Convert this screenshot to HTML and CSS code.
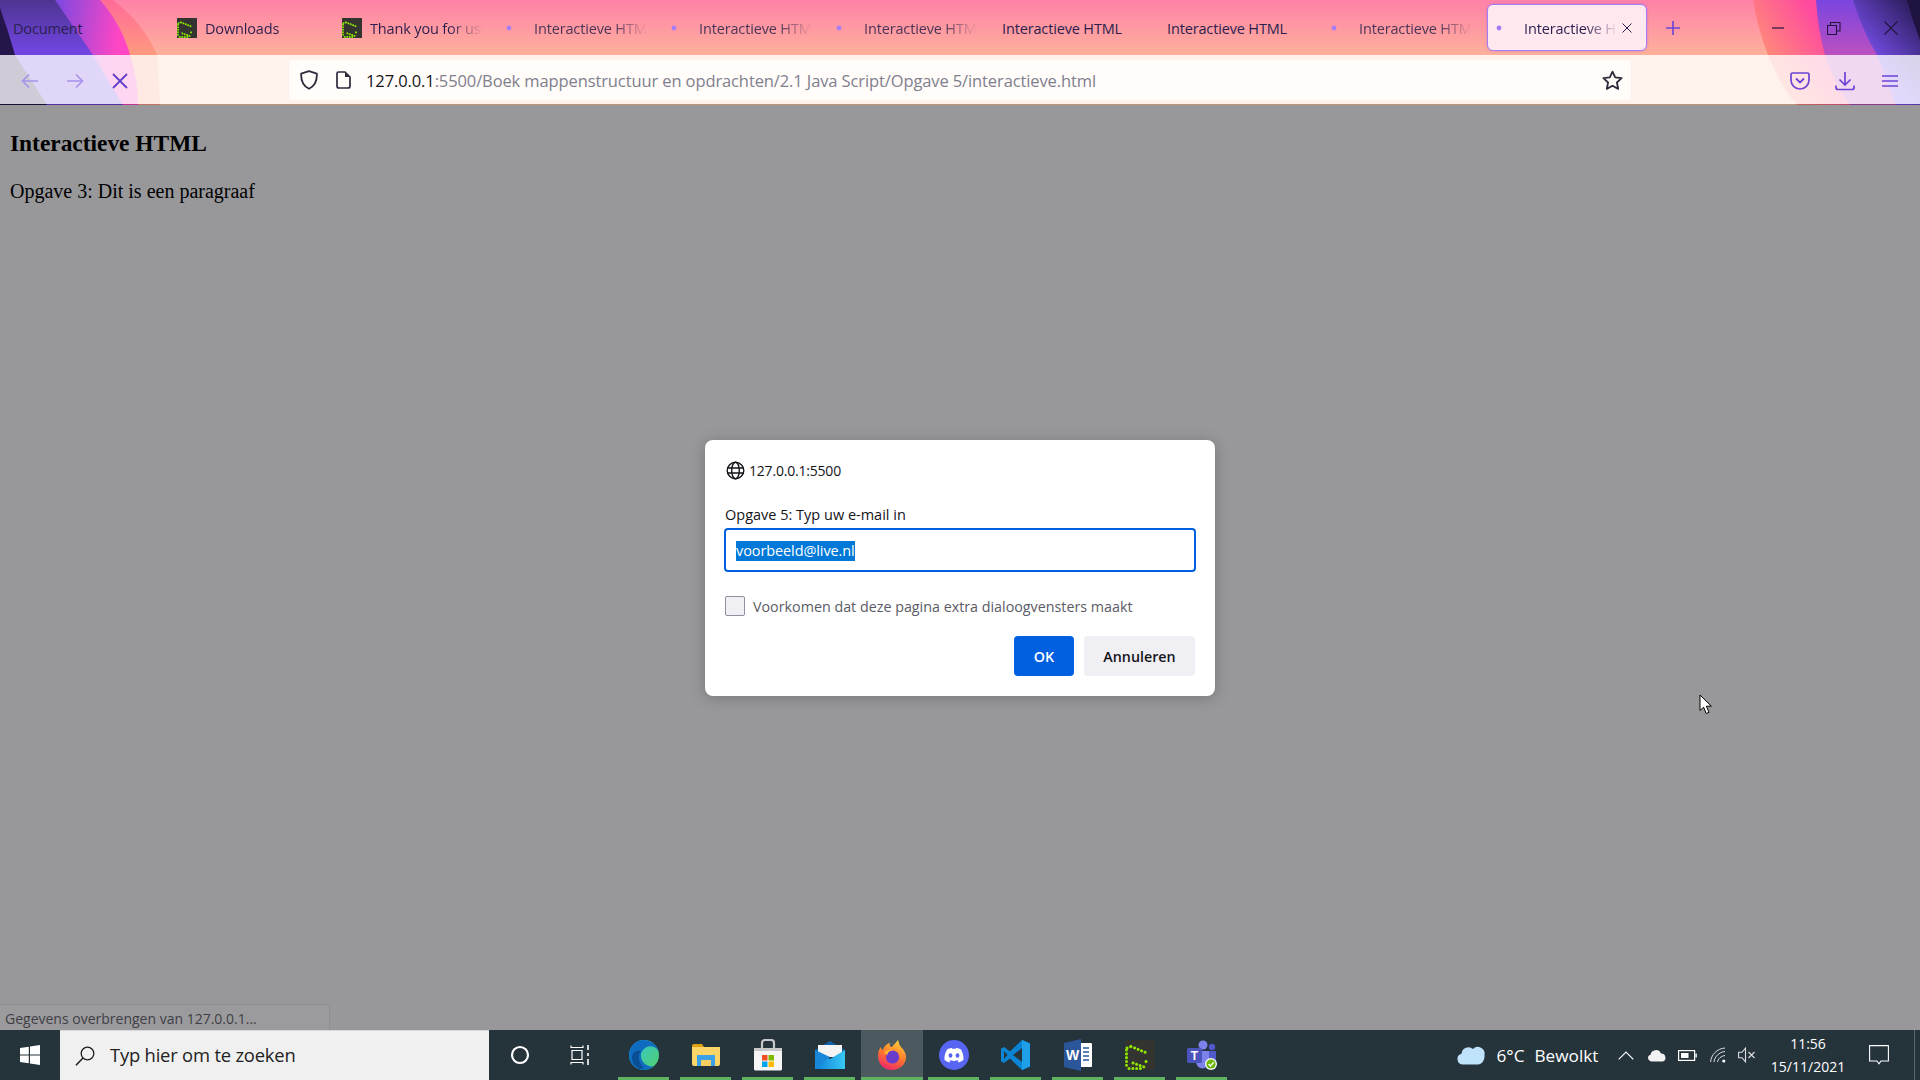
FILE: index.html
```html
<!DOCTYPE html>
<html lang="nl">
<head>
<meta charset="utf-8">
<title>Interactieve HTML</title>
<link rel="stylesheet" href="styles.css">
</head>
<body>
<svg class="defs" width="0" height="0" aria-hidden="true">
  <defs>
    <symbol id="gpuz" viewBox="0 0 30 30">
      <rect width="30" height="30" fill="#33332f"/>
      <path d="M1.5 10V28M4 28.5H16M2 8L6 6.5M6 6.5L22 13M8 23L22 28M21 21.5L23 24" fill="none" stroke="#8ee600" stroke-width="3" stroke-linecap="round" stroke-dasharray="0.1 3.7"/>
    </symbol>
    <symbol id="dot" viewBox="0 0 6 6"><circle cx="3" cy="3" r="2.4" fill="#a77cf7"/></symbol>
    <linearGradient id="baseG" gradientUnits="userSpaceOnUse" x1="0" y1="0" x2="0" y2="55"><stop offset="0" stop-color="#ff82a8"/><stop offset="1" stop-color="#ffb09c"/></linearGradient>
    <linearGradient id="orL" gradientUnits="userSpaceOnUse" x1="0" y1="0" x2="0" y2="55"><stop offset="0" stop-color="#ff6a98"/><stop offset="1" stop-color="#ff9a7e"/></linearGradient>
    <linearGradient id="magL" gradientUnits="userSpaceOnUse" x1="55" y1="20" x2="120" y2="30"><stop offset="0" stop-color="#7f48e0"/><stop offset="1" stop-color="#ff46c4"/></linearGradient>
    <linearGradient id="purL" gradientUnits="userSpaceOnUse" x1="0" y1="0" x2="0" y2="50"><stop offset="0" stop-color="#4e3590"/><stop offset="1" stop-color="#7044df"/></linearGradient>
    <linearGradient id="orR" gradientUnits="userSpaceOnUse" x1="1762" y1="50" x2="1815" y2="15"><stop offset="0" stop-color="#ff8a78"/><stop offset="1" stop-color="#ff4aa0"/></linearGradient>
    <linearGradient id="purR" gradientUnits="userSpaceOnUse" x1="0" y1="0" x2="0" y2="55"><stop offset="0" stop-color="#7a45e0"/><stop offset="1" stop-color="#bb50c0"/></linearGradient>
    <linearGradient id="inR" gradientUnits="userSpaceOnUse" x1="1865" y1="55" x2="1915" y2="10"><stop offset="0" stop-color="#7a50f0"/><stop offset="1" stop-color="#2e1f60"/></linearGradient>
    <linearGradient id="edgeG" x1="0" y1="0" x2="1" y2="1"><stop offset="0" stop-color="#2fc4dc"/><stop offset="1" stop-color="#52d06c"/></linearGradient>
    <linearGradient id="ffG" x1="0.7" y1="0" x2="0.3" y2="1"><stop offset="0" stop-color="#ffcf3a"/><stop offset="0.5" stop-color="#ff7a2c"/><stop offset="1" stop-color="#f0246c"/></linearGradient>
    <linearGradient id="mailG" x1="0" y1="0" x2="1" y2="0"><stop offset="0" stop-color="#0f80d8"/><stop offset="1" stop-color="#38c8f4"/></linearGradient>
  </defs>
</svg>

<header class="chrome">
  <svg class="theme" width="1920" height="105" viewBox="0 0 1920 105" aria-hidden="true">
    <rect width="1920" height="105" fill="url(#baseG)"/>
    <rect y="55" width="1920" height="50" fill="#ffc4a0"/>
    <path d="M0 0H113Q145 25 157 55L160 105H0Z" fill="url(#orL)"/>
    <path d="M0 0H100Q122 25 130 55Q138 80 138 105H0Z" fill="url(#magL)"/>
    <path d="M0 0H55L93 55L123 105H0Z" fill="url(#purL)"/>
    <path d="M0 8Q8 30 15 55L47 105H0Z" fill="#24154a"/>
    <path d="M1753 0Q1758 30 1768 55Q1780 85 1797 105H1920V0Z" fill="url(#orR)"/>
    <path d="M1816 0Q1818 30 1825 55Q1835 85 1850 105H1920V0Z" fill="url(#purR)"/>
    <path d="M1853 0Q1862 30 1877 55L1896 105H1920V0Z" fill="url(#inR)"/>
    <path d="M1907 0Q1912 20 1920 40V0Z" fill="#1f1440"/>
    <rect y="55" width="1920" height="49" fill="#fff" fill-opacity=".78"/>
    <rect y="104" width="1920" height="1" fill="#000" fill-opacity=".25"/>
  </svg>

  <div class="tabbar">
    <div class="tab"><span class="title title-plain">Document</span></div>
    <div class="tab"><svg class="fav" width="20" height="20"><use href="#gpuz"/></svg><span class="title fade">Downloads</span></div>
    <div class="tab"><svg class="fav" width="20" height="20"><use href="#gpuz"/></svg><span class="title fade">Thank you for using</span></div>
    <div class="tab"><svg class="dot" width="6" height="6"><use href="#dot"/></svg><span class="title fade pale">Interactieve HTML</span></div>
    <div class="tab"><svg class="dot" width="6" height="6"><use href="#dot"/></svg><span class="title fade pale">Interactieve HTML</span></div>
    <div class="tab"><svg class="dot" width="6" height="6"><use href="#dot"/></svg><span class="title fade pale">Interactieve HTML</span></div>
    <div class="tab"><span class="title">Interactieve HTML</span></div>
    <div class="tab"><span class="title">Interactieve HTML</span></div>
    <div class="tab"><svg class="dot" width="6" height="6"><use href="#dot"/></svg><span class="title fade pale">Interactieve HTML</span></div>
    <div class="tab tab-active">
      <svg class="dot" width="6" height="6"><use href="#dot"/></svg><span class="title fade-short">Interactieve HTML</span>
      <svg class="tab-x" width="12" height="12" viewBox="0 0 12 12"><path d="M1.5 1.5L10.5 10.5M10.5 1.5L1.5 10.5" stroke="#2b2150" stroke-width="1"/></svg>
    </div>
    <div class="newtab">
      <svg width="16" height="16" viewBox="0 0 16 16"><path d="M8 1V15M1 8H15" stroke="#6b44d6" stroke-width="1.6"/></svg>
    </div>
    <div class="winctl">
      <div class="winbtn"><svg width="14" height="14" viewBox="0 0 14 14"><path d="M1 7H13" stroke="#23143f" stroke-width="1.2"/></svg></div>
      <div class="winbtn"><svg width="14" height="14" viewBox="0 0 14 14"><path d="M.5 4.5H9.5V13.5H.5ZM3.5 4V1.5H13V10H10" fill="none" stroke="#23143f" stroke-width="1.1"/></svg></div>
      <div class="winbtn"><svg width="14" height="14" viewBox="0 0 14 14"><path d="M.5 .5L13.5 13.5M13.5 .5L.5 13.5" stroke="#23143f" stroke-width="1.1"/></svg></div>
    </div>
  </div>

  <div class="navbar">
    <div class="navbtn"><svg width="18" height="16" viewBox="0 0 18 16"><path d="M17 8H2M8 1.5L1.5 8L8 14.5" fill="none" stroke="#a892ea" stroke-width="1.6"/></svg></div>
    <div class="navbtn"><svg width="18" height="16" viewBox="0 0 18 16"><path d="M1 8H16M10 1.5L16.5 8L10 14.5" fill="none" stroke="#a892ea" stroke-width="1.6"/></svg></div>
    <div class="navbtn"><svg width="16" height="16" viewBox="0 0 16 16"><path d="M1 1L15 15M15 1L1 15" stroke="#5f3fc8" stroke-width="1.8"/></svg></div>
    <div class="urlbar">
      <svg class="shield" width="18" height="20" viewBox="0 0 18 20"><path d="M9 1.2L16.8 3.6C17.2 10 15 15.8 9 18.8C3 15.8 .8 10 1.2 3.6Z" fill="none" stroke="#2f2a3c" stroke-width="1.8" stroke-linejoin="round"/></svg>
      <svg class="page" width="15" height="18" viewBox="0 0 15 18"><path d="M2.5 1H9L14 6V15A2 2 0 0 1 12 17H3A2 2 0 0 1 1 15V2.5A1.5 1.5 0 0 1 2.5 1Z" fill="none" stroke="#2f2a3c" stroke-width="1.7"/><path d="M9 1V6H14Z" fill="#2f2a3c"/></svg>
      <div class="url"><span class="host">127.0.0.1</span>:5500/Boek mappenstructuur en opdrachten/2.1 Java Script/Opgave 5/interactieve.html</div>
      <svg class="star" width="21" height="21" viewBox="0 0 21 21"><path d="M10.5 1.6L13.2 7.4L19.6 8.2L14.9 12.5L16.2 18.9L10.5 15.7L4.8 18.9L6.1 12.5L1.4 8.2L7.8 7.4Z" fill="none" stroke="#2f2a3c" stroke-width="1.8" stroke-linejoin="round"/></svg>
    </div>
    <div class="navright">
      <div class="navbtn"><svg width="20" height="18" viewBox="0 0 20 18"><path d="M2.5 1H17.5A1.5 1.5 0 0 1 19 2.5V8A9 9 0 0 1 1 8V2.5A1.5 1.5 0 0 1 2.5 1Z" fill="none" stroke="#6b44d6" stroke-width="1.7"/><path d="M6 6.5L10 10.5L14 6.5" fill="none" stroke="#6b44d6" stroke-width="1.8"/></svg></div>
      <div class="navbtn"><svg width="20" height="20" viewBox="0 0 20 20"><path d="M10 1V13.5M4.5 8.5L10 14L15.5 8.5M1 14.5V16.5A2 2 0 0 0 3 18.5H17A2 2 0 0 0 19 16.5V14.5" fill="none" stroke="#6b44d6" stroke-width="1.7"/></svg></div>
      <div class="navbtn"><svg width="16" height="14" viewBox="0 0 16 14"><path d="M0 2H16M0 7H16M0 12H16" stroke="#6b44d6" stroke-width="1.6"/></svg></div>
    </div>
  </div>
</header>

<main class="page-area">
  <h3 class="page-title">Interactieve HTML</h3>
  <p class="page-text">Opgave 3: Dit is een paragraaf</p>

  <div class="status">Gegevens overbrengen van 127.0.0.1...</div>

  <section class="dialog">
    <div class="dlg-origin">
      <svg width="19" height="19" viewBox="0 0 19 19"><g fill="none" stroke="#15141a" stroke-width="1.4"><circle cx="9.5" cy="9.5" r="8.3"/><ellipse cx="9.5" cy="9.5" rx="3.8" ry="8.3"/><path d="M1.2 7H17.8M1.2 12H17.8"/></g></svg>
      <span>127.0.0.1:5500</span>
    </div>
    <div class="dlg-label">Opgave 5: Typ uw e-mail in</div>
    <div class="dlg-input"><span class="selected">voorbeeld@live.nl</span></div>
    <div class="dlg-check"><span class="box"></span><span>Voorkomen dat deze pagina extra dialoogvensters maakt</span></div>
    <div class="dlg-actions">
      <div class="btn btn-ok">OK</div>
      <div class="btn btn-cancel">Annuleren</div>
    </div>
  </section>

  <svg class="cursor" width="14" height="21" viewBox="0 0 14 21"><path d="M1 1V16.5L4.6 13.2L7.2 19.5L10 18.3L7.4 12.2H12.4Z" fill="#fff" stroke="#000" stroke-width="1"/></svg>
</main>

<footer class="taskbar">
  <div class="start"><svg width="20" height="20" viewBox="0 0 20 20" fill="#fff"><path d="M0 3L8.8 1.8V9.5H0ZM10 1.6L20 0V9.5H10ZM0 10.5H8.8V18.2L0 17ZM10 10.5H20V20L10 18.4Z"/></svg></div>
  <div class="search">
    <svg width="20" height="20" viewBox="0 0 20 20"><circle cx="12.5" cy="7.5" r="6.3" fill="none" stroke="#1c1c1c" stroke-width="1.3"/><path d="M8 12L1 19.2" stroke="#1c1c1c" stroke-width="1.5"/></svg>
    <span>Typ hier om te zoeken</span>
  </div>
  <div class="tb"><svg width="20" height="20" viewBox="0 0 20 20"><circle cx="10" cy="10" r="8" fill="none" stroke="#fff" stroke-width="2.2"/></svg></div>
  <div class="tb tb-view"><svg width="20" height="20" viewBox="0 0 20 20"><path d="M1 .5V2.5H13V.5M1 19.5V17.5H13V19.5M2 5.5H12V14.5H2Z" fill="none" stroke="#fff" stroke-width="1.2"/><path d="M18 0V5M18 8V11M18 14V20" stroke="#fff" stroke-width="1.6"/></svg></div>

  <div class="tb on"><svg width="30" height="30" viewBox="0 0 30 30"><circle cx="15" cy="15" r="15" fill="url(#edgeG)"/><path d="M0 15C0 6 7 0 15 0C22 0 28 5 29.5 11C27 6 20 5 16 8C10 12 11 20 16 24C19 26 22 27 25 26C22 29 18 30 15 30C6 30 0 23 0 15Z" fill="#0f6cc0"/><path d="M3 18C3 12 8 9 12 11C9 14 9 21 13 26C17 29 11 30 8 27C5 25 3 22 3 18Z" fill="#0a4f96"/></svg></div>
  <div class="tb on"><svg width="28" height="26" viewBox="0 0 28 26"><path d="M0 4A2 2 0 0 1 2 2H10L12 5H0Z" fill="#e0a010"/><path d="M0 5H28V22A2 2 0 0 1 26 24H2A2 2 0 0 1 0 22Z" fill="#fbd568"/><path d="M5 13H23V24H19V18H9V24H5Z" fill="#3aa0e8"/><path d="M9 18H19V24H9Z" fill="#f8cf60"/></svg></div>
  <div class="tb on"><svg width="30" height="32" viewBox="0 0 30 32"><path d="M9 9V4A3 3 0 0 1 12 1H18A3 3 0 0 1 21 4V9" fill="none" stroke="#c8c8c8" stroke-width="2.2"/><path d="M1 9H29V30A1.5 1.5 0 0 1 27.5 31.5H2.5A1.5 1.5 0 0 1 1 30Z" fill="#f6f6f6"/><path d="M1 9H29V12H1Z" fill="#c8c8c8"/><rect x="9" y="16" width="5.5" height="5.5" fill="#f25022"/><rect x="15.5" y="16" width="5.5" height="5.5" fill="#7fba00"/><rect x="9" y="22.5" width="5.5" height="5.5" fill="#00a4ef"/><rect x="15.5" y="22.5" width="5.5" height="5.5" fill="#ffb900"/></svg></div>
  <div class="tb on"><svg width="30" height="28" viewBox="0 0 30 28"><path d="M0 9L15 0L30 9V10H0Z" fill="#0f62a8"/><path d="M3 4H27V16H3Z" fill="#f4f4f4"/><path d="M0 9L15 18L30 9V28H0Z" fill="url(#mailG)"/><path d="M0 28L15 16L0 9Z" fill="#1a86d8"/></svg></div>
  <div class="tb on active"><svg width="28" height="30" viewBox="0 0 28 30"><path d="M14 30C6 30 0 24 0 16C0 12 1 9 3 7C3 9 4 10 5 10C6 6 10 3 12 3C11 5 12 7 14 7C15 5 18 3 20 0C21 3 21 5 23 7C26 10 28 13 28 17C28 24 22 30 14 30Z" fill="url(#ffG)"/><circle cx="14.5" cy="17" r="6.6" fill="#6a3ccc"/><path d="M6 13C8 10 12 9 15 10C11 11 9 13 10 15Z" fill="#ffb530"/></svg></div>
  <div class="tb on"><svg width="30" height="30" viewBox="0 0 30 30"><ellipse cx="15" cy="15" rx="15" ry="15" fill="#5865f2"/><path d="M8 9.5C10 8.5 11.5 8 13 8L13.5 9C14.5 8.8 15.5 8.8 16.5 9L17 8C18.5 8 20 8.5 22 9.5C24 13 24.8 16.5 24.5 20C22.8 21.3 21.2 22 19.7 22.5L18.6 20.7L20.2 19.8C17 21.3 13 21.3 9.8 19.8L11.4 20.7L10.3 22.5C8.8 22 7.2 21.3 5.5 20C5.2 16.5 6 13 8 9.5Z" fill="#fff"/><ellipse cx="11.5" cy="15.5" rx="1.9" ry="2.2" fill="#5865f2"/><ellipse cx="18.5" cy="15.5" rx="1.9" ry="2.2" fill="#5865f2"/></svg></div>
  <div class="tb on"><svg width="30" height="30" viewBox="0 0 30 30"><path d="M21 0L29 3.5V26.5L21 30L9 18.5L3 23L0 21.5V8.5L3 7L9 11.5Z" fill="#0a84d4"/><path d="M21 0L29 3.5V26.5L21 30Z" fill="#1f9fe8"/><path d="M21 8V22L12 15Z" fill="#26343c"/><path d="M3 11L6.5 15L3 19Z" fill="#26343c"/></svg></div>
  <div class="tb on"><svg width="28" height="32" viewBox="0 0 28 32"><path d="M11 4H27A1 1 0 0 1 28 5V27A1 1 0 0 1 27 28H11Z" fill="#fff"/><path d="M19 9H25M19 13H25M19 17H25M19 21H25" stroke="#2b579a" stroke-width="1.4"/><path d="M0 4L17 0V32L0 28Z" fill="#2b579a"/><text x="8.5" y="21" class="icon-letter" text-anchor="middle">W</text></svg></div>
  <div class="tb on"><svg width="30" height="30"><use href="#gpuz"/></svg></div>
  <div class="tb on"><svg width="30" height="30" viewBox="0 0 30 30"><circle cx="16" cy="5" r="4.5" fill="#7b83eb"/><circle cx="25" cy="7" r="3.2" fill="#5059c9"/><path d="M20 11H29V20A5 5 0 0 1 20 22Z" fill="#5059c9"/><path d="M9 11H22V22A6.5 6.5 0 0 1 9 22Z" fill="#7b83eb"/><rect x="0" y="8" width="15" height="15" rx="1.5" fill="#4b53bc"/><text x="7.5" y="20" class="icon-t" text-anchor="middle">T</text><circle cx="24" cy="24" r="6" fill="#f4f4f4"/><circle cx="24" cy="24" r="4.6" fill="#6bb700"/><path d="M21.5 24L23.5 26L26.7 22.3" fill="none" stroke="#fff" stroke-width="1.3"/></svg></div>

  <div class="tray">
    <svg class="t-cloud" width="28" height="20" viewBox="0 0 28 20"><path d="M6 19.5A5.5 5.5 0 0 1 4.5 8.7A7 7 0 0 1 16 4A6.8 6.8 0 0 1 27.5 10C28 15 25 19.5 21 19.5Z" fill="#bfe3fb"/></svg>
    <span class="t-temp">6°C</span>
    <span class="t-wx">Bewolkt</span>
    <svg class="t-caret" width="16" height="9" viewBox="0 0 16 9"><path d="M.7 8.3L8 1L15.3 8.3" fill="none" stroke="#fff" stroke-width="1.2"/></svg>
    <svg class="t-od" width="20" height="13" viewBox="0 0 20 13"><path d="M4 12.5A3.5 3.5 0 0 1 3.5 5.7A5.5 5.5 0 0 1 14 4.5A4.2 4.2 0 0 1 16 12.5Z" fill="#f2f2f2"/></svg>
    <svg class="t-bat" width="19" height="11" viewBox="0 0 19 11"><rect x=".6" y=".6" width="16" height="9.8" fill="none" stroke="#fff" stroke-width="1.2"/><rect x="3" y="3" width="7.5" height="5" fill="#fff"/><rect x="17.4" y="3.5" width="1.4" height="4" fill="#fff"/></svg>
    <svg class="t-wifi" width="16" height="16" viewBox="0 0 16 16"><g fill="none" stroke="#ddd" stroke-width="1"><path d="M.6 15C1 8 7 1.5 15 1"/><path d="M4 15C4.4 10 9 5 15 4.5"/><path d="M7.5 15C8 12 11 9 15 8.5"/></g><circle cx="13.8" cy="14" r="1.6" fill="#fff"/></svg>
    <svg class="t-vol" width="18" height="16" viewBox="0 0 18 16"><path d="M.6 5.3H4L7.5 1.2V14.8L4 10.7H.6Z" fill="none" stroke="#ddd" stroke-width="1.1"/><path d="M10.5 5L16.5 11M16.5 5L10.5 11" stroke="#ddd" stroke-width="1.1"/></svg>
    <div class="t-clock"><span>11:56</span><span>15/11/2021</span></div>
    <svg class="t-note" width="20" height="20" viewBox="0 0 20 20"><path d="M.6 .6H19.4V16H12L10 18.8L8 16H.6Z" fill="none" stroke="#fff" stroke-width="1.1"/></svg>
    <span class="t-edge"></span>
  </div>
</footer>
</body>
</html>
```
FILE: styles.css
```css
* { box-sizing: border-box; }
html, body { margin: 0; height: 100%; }
body {
  display: flex;
  flex-direction: column;
  width: 1920px;
  height: 1080px;
  overflow: hidden;
  font-family: "Open Sans", "Noto Sans", sans-serif;
}
svg { display: block; flex: none; }
.defs { position: absolute; }

/* Browser chrome */
.chrome { position: relative; height: 105px; flex: none; }
.theme { position: absolute; left: 0; top: 0; }
.tabbar {
  position: relative;
  height: 55px;
  display: flex;
  align-items: center;
  gap: 5px;
  padding-left: 2px;
}
.tab {
  width: 160px;
  height: 47px;
  flex: none;
  display: flex;
  align-items: center;
  padding-left: 10px;
  font-size: 14.5px;
  color: #2b1f4f;
}
.title { white-space: nowrap; overflow: hidden; display: block; letter-spacing: -0.15px; padding-top: 2px; line-height: 22px; }
.title-plain { margin-left: 1px; }
.fav { margin-right: 8px; }
.dot { margin: 0 22px 0 -1px; }
.fade { width: 113px; -webkit-mask-image: linear-gradient(90deg, #000 70%, transparent); mask-image: linear-gradient(90deg, #000 70%, transparent); }
.fade-short { width: 94px; -webkit-mask-image: linear-gradient(90deg, #000 65%, transparent); mask-image: linear-gradient(90deg, #000 65%, transparent); }
.pale { color: #4b3558; }
.tab-active {
  background: #ffe8ee;
  border: 1px solid #a47cf5;
  border-radius: 6px;
  box-shadow: 0 0 3px rgba(120, 80, 220, .35);
  padding-left: 9px;
}
.tab-x { margin-left: 3px; }
.newtab { width: 52px; margin-left: -5px; display: flex; justify-content: center; }
.winctl { margin-left: auto; display: flex; padding-right: 1px; }
.winbtn { width: 56.5px; height: 47px; display: flex; align-items: center; justify-content: center; }

.navbar {
  position: relative;
  height: 50px;
  display: flex;
  align-items: center;
  padding: 0 8px 0 7px;
}
.navbtn { width: 45px; height: 40px; padding-top: 2px; display: flex; align-items: center; justify-content: center; }
.urlbar {
  margin-left: 147px;
  width: 1342px;
  height: 40px;
  background: #fffcf9;
  border-radius: 4px;
  display: flex;
  align-items: center;
  padding-left: 11px;
  font-size: 16.5px;
  color: #80808e;
}
.shield { margin-right: 18px; }
.page { margin-right: 15px; }
.url { flex: 1; white-space: nowrap; letter-spacing: -0.11px; padding-top: 2px; line-height: 22px; }
.host { color: #15141a; }
.star { margin-right: 8px; }
.navright { margin-left: auto; display: flex; }

/* Page */
.page-area {
  position: relative;
  flex: 1;
  background: #98989b;
  padding: 0 10px;
  color: #000;
  font-family: "Liberation Serif", serif;
  display: flow-root;
}
.page-title { font-size: 23.4px; font-weight: bold; margin: 25px 0 23.4px; line-height: 27px; }
.page-text { font-size: 20px; margin: 23.4px 0; line-height: 23px; }

.status {
  position: absolute;
  left: 0;
  bottom: 0;
  width: 330px;
  height: 26px;
  padding: 0 5px;
  background: #9b9b9e;
  border: 1px solid #8e8e91;
  border-left: 0;
  border-bottom: 0;
  color: #3f3f45;
  font: 14px/27px "Open Sans", sans-serif;
  white-space: nowrap;
}

.dialog {
  position: absolute;
  left: 705px;
  top: 335px;
  width: 510px;
  height: 256px;
  background: #fff;
  border-radius: 8px;
  box-shadow: 0 2px 14px rgba(58, 57, 68, .35);
  padding: 20px 20px 20px 19px;
  font-size: 14px;
  color: #15141a;
  font-family: "Open Sans", sans-serif;
}
.dlg-origin { display: flex; align-items: center; gap: 4px; height: 20px; letter-spacing: -0.2px; padding-left: 2px; }
.dlg-label { margin-top: 25px; height: 20px; line-height: 20px; font-size: 14.5px; padding-left: 1px; }
.dlg-input {
  margin-top: 3px;
  height: 44px;
  border: 2px solid #0060df;
  border-radius: 4px;
  padding: 2px 10px 0;
  display: flex;
  align-items: center;
  width: 472px;
}
.selected { background: #0078d7; color: #fff; line-height: 20px; font-size: 14.5px; letter-spacing: -0.1px; }
.dlg-check { margin-top: 24px; display: flex; align-items: center; gap: 8px; color: #5b5b66; height: 20px; font-size: 14.3px; }
.box { width: 20px; height: 20px; background: #f0f0f4; border: 1px solid #8f8f9d; border-radius: 2px; margin-left: 1px; }
.dlg-actions { margin-top: 20px; display: flex; justify-content: flex-end; gap: 10px; }
.btn { height: 40px; border-radius: 4px; display: flex; align-items: center; justify-content: center; font-weight: 600; font-size: 14.3px; }
.btn-ok { width: 60px; background: #0060df; color: #fff; }
.btn-cancel { width: 111px; background: #f0f0f4; color: #15141a; }

.cursor { position: absolute; left: 1699px; top: 589px; }

/* Taskbar */
.taskbar {
  height: 50px;
  flex: none;
  display: flex;
  align-items: stretch;
  background: #25333b;
}
.start { width: 60px; display: flex; align-items: center; justify-content: center; }
.search {
  width: 429px;
  background: #f0f0f0;
  border-top: 1px solid #d8d8d8;
  display: flex;
  align-items: center;
  padding: 0 0 0 15px;
  gap: 15px;
  color: #222;
  font-size: 18.4px;
  letter-spacing: -0.2px;
}
.search span { padding-bottom: 2px; }
.tb { width: 62px; position: relative; display: flex; align-items: center; justify-content: center; }
.tb-view { padding-right: 5px; }
.on::after {
  content: "";
  position: absolute;
  left: 5px;
  right: 6px;
  bottom: 0;
  height: 3px;
  background: #5fb360;
}
.active { background: #4c5a5f; }
.active::after { left: 0; right: 0; }
.icon-letter { fill: #fff; font: bold 14px "Liberation Sans", sans-serif; }
.icon-t { fill: #fff; font: bold 12px "Liberation Sans", sans-serif; }

.tray {
  margin-left: auto;
  display: flex;
  align-items: center;
  color: #fff;
  font-size: 17.2px;
  height: 50px;
  position: relative;
}
.t-cloud { margin-right: 11px; }
.t-temp { margin-right: 10px; }
.t-wx { margin-right: 20px; }
.t-caret { margin-right: 13px; }
.t-od { margin-right: 11px; }
.t-bat { margin-right: 13px; }
.t-wifi { margin-right: 12px; }
.t-vol { margin-right: 11.6px; }
.t-clock { display: flex; flex-direction: column; align-items: center; font-size: 14px; width: 80px; line-height: 23px; }
.t-note { margin-left: 21px; margin-right: 31px; }
.t-edge { position: absolute; right: 5px; top: 0; bottom: 0; width: 1px; background: #5a666c; }
```
